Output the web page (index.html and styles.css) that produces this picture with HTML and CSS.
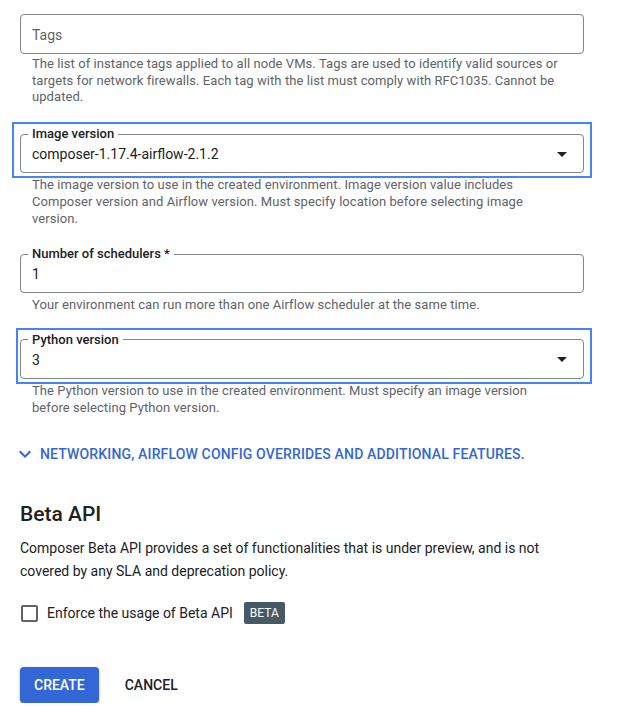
FILE: index.html
```html
<!DOCTYPE html>
<html lang="en">
<head>
<meta charset="utf-8">
<title>Create environment</title>
<link rel="stylesheet" href="styles.css">
</head>
<body>
<main class="form">
  <div class="input-plain"><span class="placeholder">Tags</span></div>
  <p class="hint hint--first">The list of instance tags applied to all node VMs. Tags are used to identify valid sources or targets for network firewalls. Each tag with the list must comply with RFC1035. Cannot be updated.</p>

  <div class="focus focus--image">
    <fieldset class="outlined">
      <legend>Image version</legend>
      <div class="value value--select">
        <span>composer-1.17.4-airflow-2.1.2</span>
        <svg class="arrow" width="10" height="5" viewBox="0 0 10 5"><polygon points="0,0 10,0 5,5"/></svg>
      </div>
    </fieldset>
  </div>
  <p class="hint">The image version to use in the created environment. Image version value includes Composer version and Airflow version. Must specify location before selecting image version.</p>

  <fieldset class="outlined outlined--sched">
    <legend>Number of schedulers *</legend>
    <div class="value"><span>1</span></div>
  </fieldset>
  <p class="hint">Your environment can run more than one Airflow scheduler at the same time.</p>

  <div class="focus focus--python">
    <fieldset class="outlined">
      <legend>Python version</legend>
      <div class="value value--select">
        <span>3</span>
        <svg class="arrow" width="10" height="5" viewBox="0 0 10 5"><polygon points="0,0 10,0 5,5"/></svg>
      </div>
    </fieldset>
  </div>
  <p class="hint">The Python version to use in the created environment. Must specify an image version before selecting Python version.</p>

  <div class="expander">
    <svg class="chevron" width="14" height="10" viewBox="5 7 14 10"><path d="M16.59 8.59L12 13.17 7.41 8.59 6 10l6 6 6-6z"/></svg>
    <span>NETWORKING, AIRFLOW CONFIG OVERRIDES AND ADDITIONAL FEATURES.</span>
  </div>

  <h2 class="section-title">Beta API</h2>
  <p class="section-text">Composer Beta API provides a set of functionalities that is under preview, and is not covered by any SLA and deprecation policy.</p>

  <label class="check-row">
    <span class="checkbox"></span>
    <span class="check-label">Enforce the usage of Beta API</span>
    <span class="badge">BETA</span>
  </label>

  <div class="actions">
    <button class="btn btn--primary">CREATE</button>
    <button class="btn btn--flat">CANCEL</button>
  </div>
</main>
</body>
</html>
```

FILE: styles.css
```css
* { box-sizing: border-box; }

html, body {
  margin: 0;
  padding: 0;
  background: #fff;
}

body {
  font-family: Roboto, "Liberation Sans", Arial, sans-serif;
  color: #202124;
  -webkit-font-smoothing: antialiased;
}

.form {
  width: 564px;
  margin-left: 20px;
  padding-top: 14px;
  display: flex;
  flex-direction: column;
}

.input-plain {
  height: 40px;
  border: 1px solid #80868b;
  border-radius: 4px;
  padding: 2px 0 0 11px;
  display: flex;
  align-items: center;
  font-size: 14px;
}

.placeholder { color: #5f6368; }

.hint {
  margin: 4px 0 0;
  padding: 0 20px 0 12px;
  font-size: 13px;
  letter-spacing: 0.07px;
  line-height: 16.7px;
  color: #5f6368;
}

.hint--first { margin-top: 2px; }

.focus {
  border: 2px solid #4285f4;
  padding: 3px 6px;
  margin: 16px -8px -5px;
}

.focus--python {
  margin-top: 14px;
  margin-left: -4px;
  padding-left: 2px;
}

.outlined {
  margin: 0;
  padding: 0 7px;
  border: 1px solid #80868b;
  border-radius: 4px;
  min-inline-size: 0;
}

.outlined--sched { margin-top: 20px; }

.outlined legend {
  padding: 0 4px;
  font-size: 13px;
  line-height: 14px;
  font-weight: 500;
  color: #202124;
}

.value {
  display: flex;
  align-items: center;
  justify-content: space-between;
  height: 31px;
  padding: 0 9px 5px 4px;
  font-size: 14px;
  line-height: 26px;
  color: #202124;
}

.arrow { fill: #202124; display: block; }

.expander {
  display: flex;
  align-items: center;
  gap: 8px;
  height: 20px;
  margin: 28px 0 0 -2px;
  color: #3367d6;
  font-size: 14px;
  letter-spacing: 0.15px;
  font-weight: 500;
}

.chevron { fill: #3367d6; display: block; }

.section-title {
  margin: 36px 0 0;
  font-size: 21px;
  line-height: 28px;
  font-weight: 500;
}

.section-text {
  margin: 9px 0 0;
  font-size: 14px;
  line-height: 23px;
}

.check-row {
  display: flex;
  align-items: center;
  height: 22px;
  margin-top: 19px;
  font-size: 14px;
}

.checkbox {
  width: 17px;
  height: 17px;
  margin-left: 1px;
  border: 2px solid #5f6368;
  border-radius: 2px;
}

.check-label { margin-left: 9px; }

.badge {
  margin-left: 11px;
  height: 22px;
  padding: 0 6px;
  line-height: 22px;
  font-size: 12px;
  background: #455a64;
  color: #fff;
  border-radius: 2px;
}

.actions {
  display: flex;
  align-items: center;
  gap: 12px;
  margin-top: 43px;
}

.btn {
  height: 36px;
  padding: 0 14px;
  border: 0;
  border-radius: 4px;
  font-family: inherit;
  font-size: 14px;
  font-weight: 500;
  background: transparent;
  color: #202124;
}

.btn--primary {
  background: #3367d6;
  color: #fff;
  box-shadow: 0 1px 3px rgba(0,0,0,0.3);
}
```
